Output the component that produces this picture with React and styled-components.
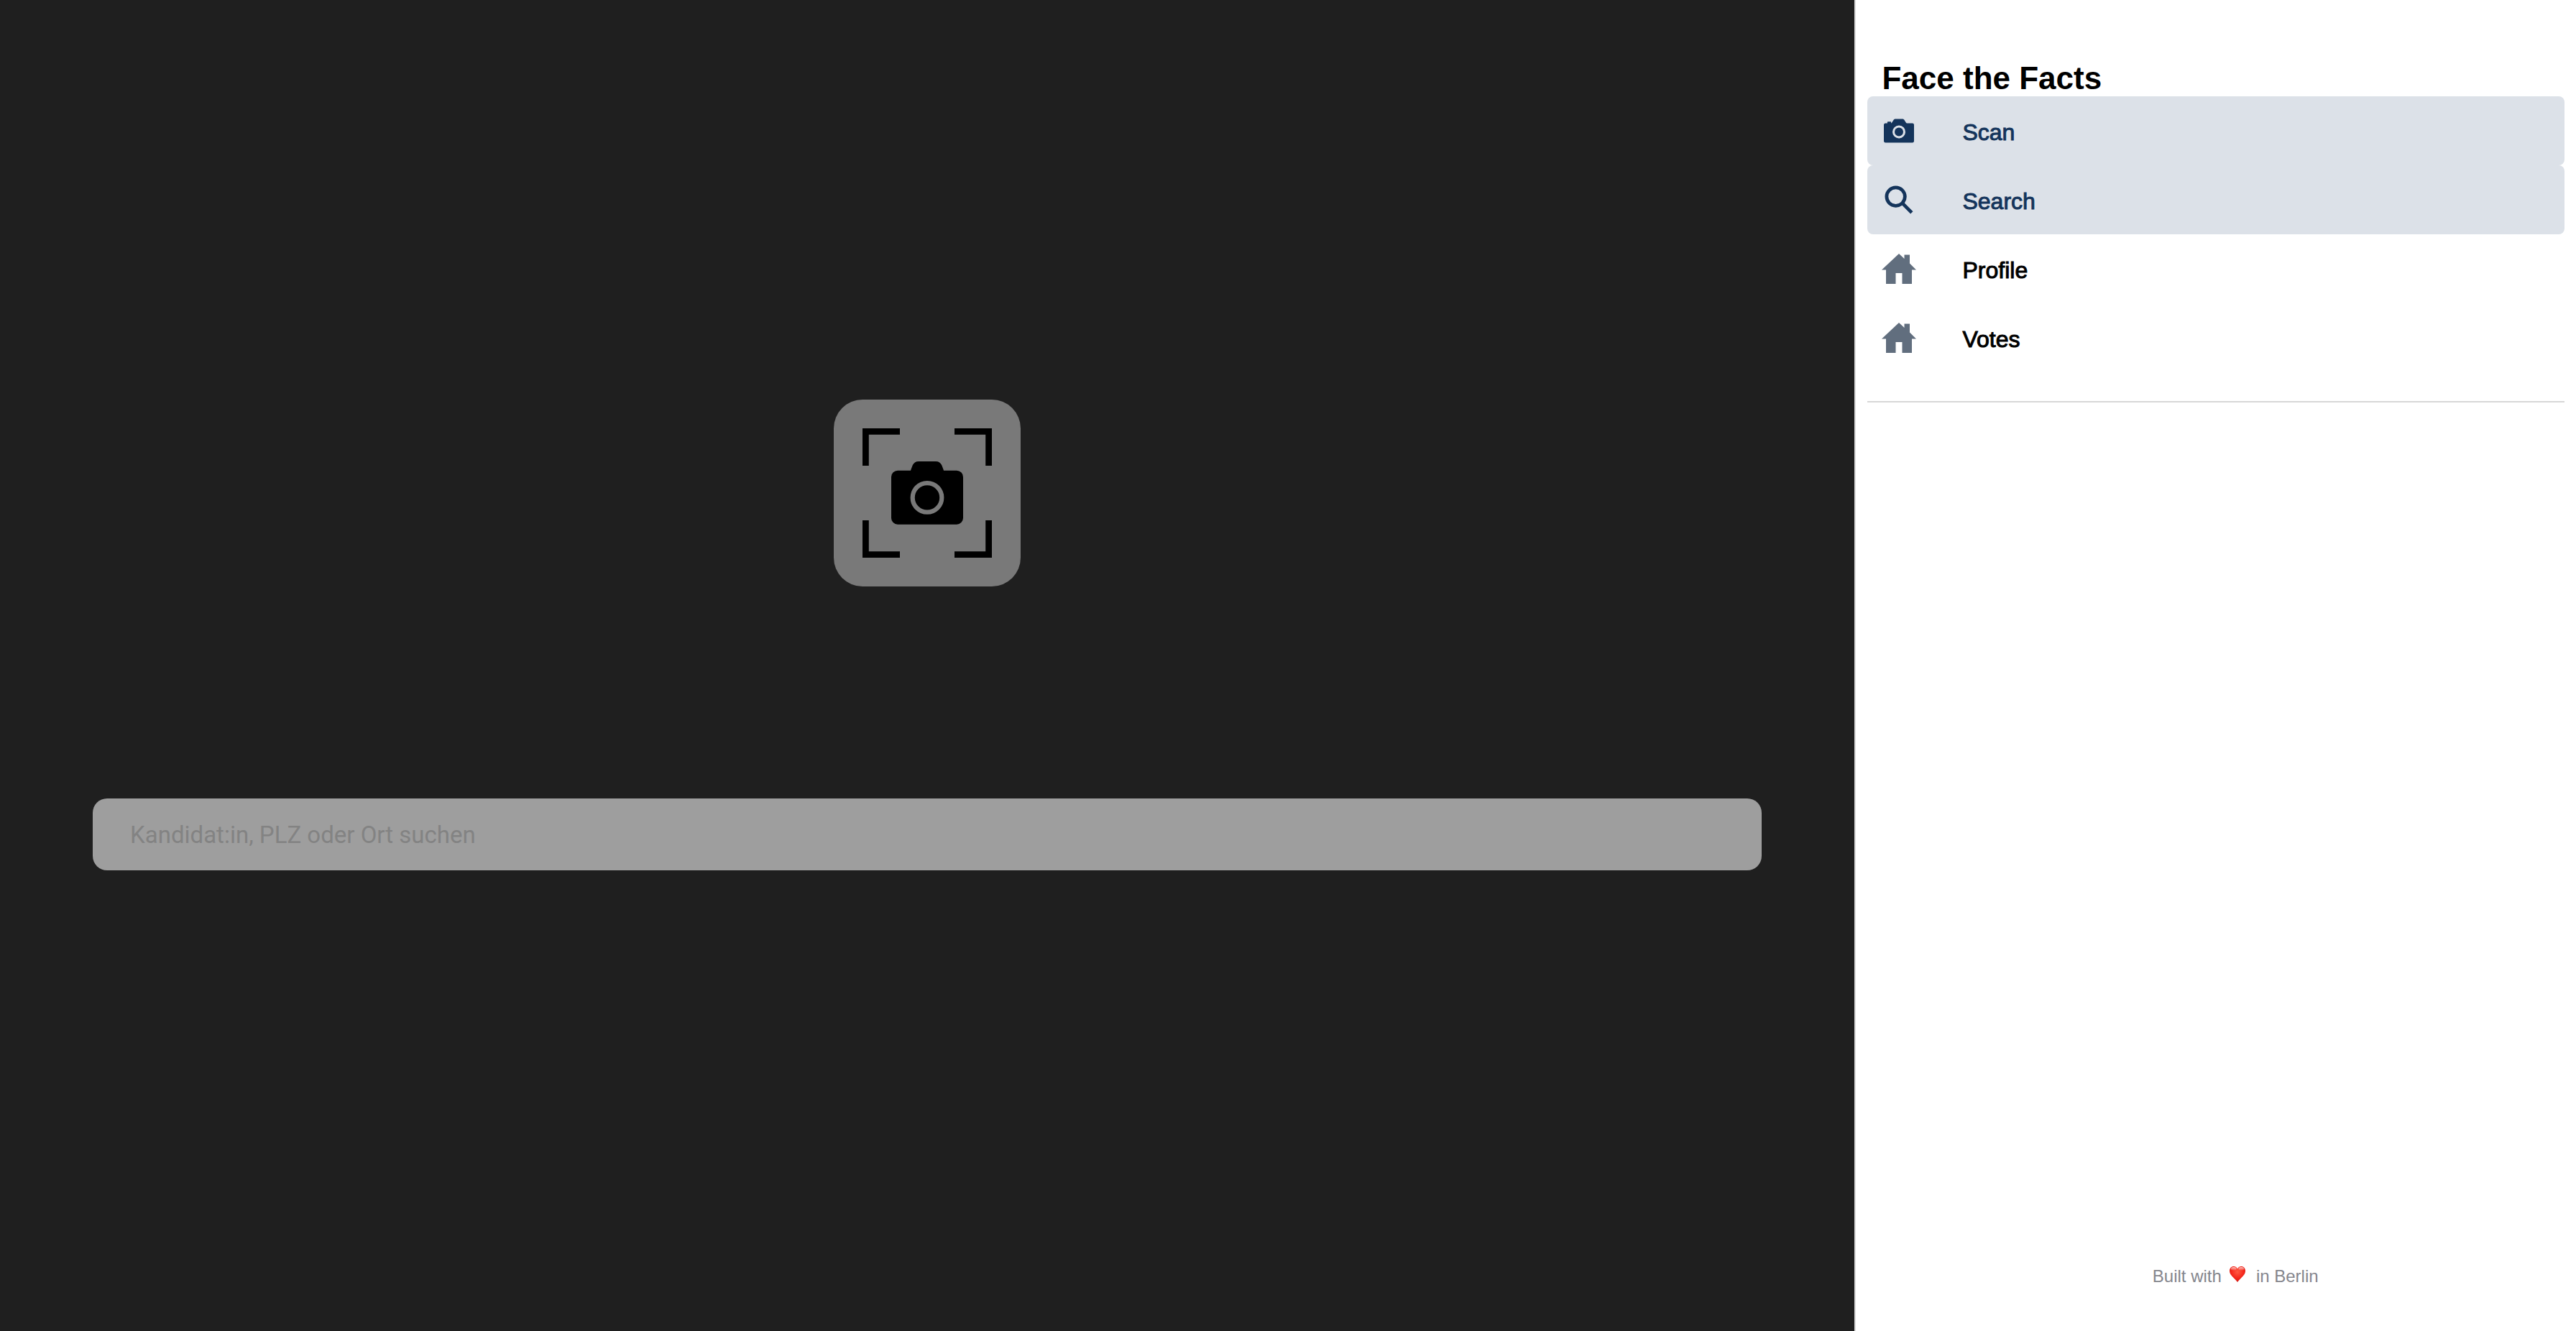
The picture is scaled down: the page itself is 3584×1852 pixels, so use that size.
import React from "react";
import styled, { createGlobalStyle } from "styled-components";
import { IoCameraSharp, IoSearchSharp, IoHomeSharp } from "react-icons/io5";

const GlobalStyle = createGlobalStyle`
  *, *::before, *::after { box-sizing: border-box; }
  body {
    margin: 0;
    background: #ffffff;
    font-family: "Liberation Sans", Arial, sans-serif;
  }
`;

const Layout = styled.div`
  display: grid;
  grid-template-columns: 72% 28%;
  min-height: 100vh;
`;

const Stage = styled.main`
  display: grid;
  grid-template-rows: 30vh 30vh;
  grid-auto-rows: auto;
  align-content: start;
  justify-items: center;
  background: #1f1f1f;
`;

const ScanButton = styled.button`
  grid-row: 2;
  display: flex;
  align-items: center;
  justify-content: center;
  width: 260px;
  height: 260px;
  padding: 0;
  border: 0;
  border-radius: 40px;
  background: #797979;
  color: #000000;
  cursor: pointer;
`;

const SearchField = styled.input`
  grid-row: 3;
  width: 90%;
  height: 100px;
  padding: 0 52px;
  border: 0;
  border-radius: 20px;
  background: #9e9e9e;
  color: #1f1f1f;
  font-family: Roboto, sans-serif;
  font-size: 33px;

  &::placeholder {
    color: #838383;
    opacity: 1;
  }
`;

const Sidebar = styled.aside`
  display: flex;
  flex-direction: column;
  padding: 84px 16px 60px;
  border-left: 2px solid #dcdcdc;
`;

const Title = styled.h1`
  margin: 0;
  padding: 0 20px;
  color: #000000;
  font-size: 44px;
  line-height: 50px;
`;

const Menu = styled.nav`
  padding-bottom: 40px;
  border-bottom: 2px solid #d7d7d7;
`;

const MenuItem = styled.a`
  display: flex;
  align-items: center;
  gap: 64px;
  height: 96px;
  padding: 0 20px;
  border-radius: 8px;
  background: ${({ $active }) => ($active ? "#dce1e8" : "transparent")};
  color: ${({ $active }) => ($active ? "#14345b" : "#000000")};
  font-size: 32px;
  line-height: 40px;
  text-decoration: none;
  -webkit-text-stroke: 1px currentColor;

  svg {
    flex: none;
    width: 48px;
    height: 48px;
    color: ${({ $active }) => ($active ? "#14345b" : "#616e7e")};
    -webkit-text-stroke: 0;
  }
`;

const MenuLabel = styled.span`
  padding-top: 4px;
`;

const Footer = styled.footer`
  display: flex;
  align-items: center;
  justify-content: center;
  gap: 8px;
  margin-top: auto;
  padding-left: 54px;
  color: #85868d;
  font-size: 24px;
  line-height: 32px;
`;

const HeartSlot = styled.span`
  display: flex;
  padding: 0 6px 6px 2px;
`;

function ScanIcon() {
  return (
    <svg width="180" height="180" viewBox="0 0 180 180" aria-hidden="true">
      <path
        d="M4.4 52V4.4H52M128 4.4h47.6V52M175.6 128v47.6H128M52 175.6H4.4V128"
        fill="none"
        stroke="currentColor"
        strokeWidth="8.8"
      />
      <path
        d="M49 59h18c1-3 2-6 3-8 2-3 4-4.700 8-4.700h24c4 0 6 1.700 8 4.700 1 2 2 5 3 8h18a9 9 0 0 1 9 9v57a9 9 0 0 1-9 9H49a9 9 0 0 1-9-9V68a9 9 0 0 1 9-9z"
        transform="translate(0 -0.300)"
        fill="currentColor"
      />
      <circle cx="90" cy="96.400" r="20.300" fill="none" stroke="#797979" strokeWidth="6.200" />
    </svg>
  );
}

function Heart() {
  return (
    <svg width="24" height="24" viewBox="0 0 24 24" role="img" aria-label="love">
      <defs>
        <radialGradient id="heartFill" cx="0.5" cy="0.35" r="0.65">
          <stop offset="0" stopColor="#ff5a43" />
          <stop offset="0.6" stopColor="#f5281c" />
          <stop offset="1" stopColor="#d01510" />
        </radialGradient>
        <linearGradient id="heartShine" x1="0" y1="0" x2="0" y2="1">
          <stop offset="0" stopColor="#ffffff" stopOpacity="0.75" />
          <stop offset="1" stopColor="#ffffff" stopOpacity="0" />
        </linearGradient>
      </defs>
      <path
        d="M12 23C8.500 17.500 1 14 1 7.300 1 3.500 3.600 1 6.800 1 9.200 1 11.100 2.400 12 4.500 12.900 2.400 14.800 1 17.200 1 20.400 1 23 3.500 23 7.300 23 14 15.500 17.500 12 23z"
        fill="url(#heartFill)"
      />
      <ellipse cx="6.700" cy="4.500" rx="3.800" ry="2.500" fill="url(#heartShine)" />
      <ellipse cx="17.300" cy="4.500" rx="3.800" ry="2.500" fill="url(#heartShine)" />
    </svg>
  );
}

const pages = [
  { title: "Scan", Icon: IoCameraSharp, active: true },
  { title: "Search", Icon: IoSearchSharp, active: true },
  { title: "Profile", Icon: IoHomeSharp, active: false },
  { title: "Votes", Icon: IoHomeSharp, active: false },
];

export default function App() {
  return (
    <>
      <GlobalStyle />
      <Layout>
        <Stage>
          <ScanButton type="button" aria-label="Scan">
            <ScanIcon />
          </ScanButton>
          <SearchField
            type="text"
            aria-label="Kandidat:in, PLZ oder Ort suchen"
            placeholder="Kandidat:in, PLZ oder Ort suchen"
          />
        </Stage>
        <Sidebar>
          <Title>Face the Facts</Title>
          <Menu>
            {pages.map(({ title, Icon, active }) => (
              <MenuItem key={title} href={`#${title.toLowerCase()}`} $active={active}>
                <Icon aria-hidden="true" />
                <MenuLabel>{title}</MenuLabel>
              </MenuItem>
            ))}
          </Menu>
          <Footer>
            <span>Built with</span>
            <HeartSlot>
              <Heart />
            </HeartSlot>
            <span>in Berlin</span>
          </Footer>
        </Sidebar>
      </Layout>
    </>
  );
}
